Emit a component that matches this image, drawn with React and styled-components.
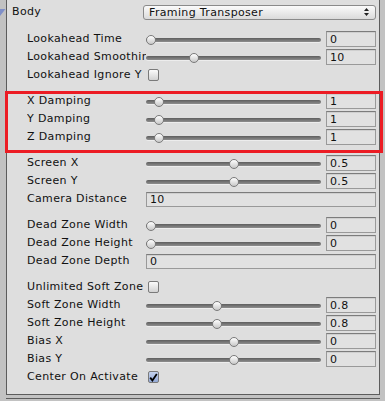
import React from 'react';
import styled, { createGlobalStyle } from 'styled-components';

const GlobalStyle = createGlobalStyle`
  html, body {
    margin: 0;
    padding: 0;
    background: #c2c2c2;
  }
  body {
    font-family: "DejaVu Sans", Verdana, sans-serif;
    font-size: 11px;
    color: #111;
  }
`;

const Page = styled.div`
  position: relative;
  display: flex;
  width: 385px;
  height: 401px;
  overflow: hidden;
  background: #c2c2c2;
`;

const Gutter = styled.div`
  flex: none;
  width: 6px;
  padding-top: 9px;
  svg {
    display: block;
  }
`;

const Column = styled.div`
  flex: none;
  width: 374px;
  display: flex;
  flex-direction: column;
`;

const Panel = styled.div`
  box-sizing: border-box;
  height: 396px;
  border: 1px solid #5c5c5c;
  border-top: none;
  background: #dedede;
  padding: 3px 2px 0 0;
`;

const NextPanel = styled.div`
  margin-top: 3px;
  border-top: 1px solid #5c5c5c;
  height: 2px;
`;

const Group = styled.div`
  margin-top: ${p => p.gap || 8}px;
`;

const Row = styled.div`
  display: flex;
  align-items: center;
  height: 18px;
  padding-left: ${p => (p.header ? 5 : 20)}px;
`;

const Label = styled.div`
  flex: none;
  width: ${p => (p.header ? 131 : 119)}px;
  overflow: hidden;
  white-space: nowrap;
  letter-spacing: 0.35px;
  line-height: 18px;
`;

const Dropdown = styled.div`
  box-sizing: border-box;
  flex: none;
  width: 233px;
  height: 15px;
  display: flex;
  align-items: center;
  justify-content: space-between;
  padding: 0 6px 0 5px;
  border: 1px solid #8a8a8a;
  border-radius: 3px;
  background: linear-gradient(#fbfbfb, #dadada);
  letter-spacing: 0.35px;
`;

const SliderBox = styled.div`
  position: relative;
  flex: none;
  width: 175px;
  height: 18px;
`;

const Track = styled.div`
  position: absolute;
  left: 0;
  right: 0;
  top: 8px;
  height: 4px;
  border-radius: 2px;
  background: linear-gradient(#5e5e5e, #8e8e8e);
  box-shadow: 0 1px 0 #ededed;
`;

const Thumb = styled.div`
  position: absolute;
  top: 5px;
  width: 10px;
  height: 10px;
  box-sizing: border-box;
  border-radius: 50%;
  border: 1px solid #7a7a7a;
  background: linear-gradient(#ffffff, #c8c8c8);
`;

const Field = styled.div`
  box-sizing: border-box;
  flex: none;
  width: ${p => (p.wide ? 230 : 50)}px;
  height: ${p => (p.wide ? 15 : 16)}px;
  margin-left: ${p => (p.wide ? 0 : 5)}px;
  padding-left: 3px;
  display: flex;
  align-items: center;
  border: 1px solid #999;
  border-top-color: #7c7c7c;
  background: #e1e1e1;
  box-shadow: inset 0 1px 0 #cfcfcf;
  color: #111;
  letter-spacing: 0.35px;
`;

const Check = styled.div`
  box-sizing: border-box;
  flex: none;
  width: 11px;
  height: 12px;
  margin-left: 2px;
  border: 1px solid #7a7a7a;
  border-radius: 2px;
  background: ${p =>
    p.checked ? 'linear-gradient(#c4d2ee, #93a9d6)' : 'linear-gradient(#fbfbfb, #d2d2d2)'};
  display: flex;
  align-items: center;
  justify-content: center;
`;

const Highlight = styled.div`
  position: absolute;
  left: 5px;
  top: 91px;
  width: 378px;
  height: 62px;
  box-sizing: border-box;
  border: 3px solid #ec1c24;
  pointer-events: none;
`;

const Slider = ({ frac }) => (
  <SliderBox>
    <Track />
    <Thumb style={{ left: `${Math.round(frac * 165)}px` }} />
  </SliderBox>
);

const SliderRow = ({ label, frac, value }) => (
  <Row>
    <Label>{label}</Label>
    <Slider frac={frac} />
    <Field>{value}</Field>
  </Row>
);

const FieldRow = ({ label, value }) => (
  <Row>
    <Label>{label}</Label>
    <Field wide>{value}</Field>
  </Row>
);

const CheckRow = ({ label, checked }) => (
  <Row>
    <Label>{label}</Label>
    <Check checked={checked}>
      {checked && (
        <svg width="9" height="9" viewBox="0 0 9 9">
          <path d="M1.2 4.6 L3.4 7.4 L7.8 1" fill="none" stroke="#000" strokeWidth="1.8" />
        </svg>
      )}
    </Check>
  </Row>
);

const SortArrows = () => (
  <svg width="5" height="8" viewBox="0 0 5 8">
    <path d="M2.5 0 L5 3 L0 3 Z M0 5 L5 5 L2.5 8 Z" fill="#222" />
  </svg>
);

export default function App() {
  return (
    <Page>
      <GlobalStyle />
      <Gutter>
        <svg width="6" height="8" viewBox="0 0 6 8">
          <polygon points="0,0 5.5,0 0,7" fill="#7f8fc8" />
        </svg>
      </Gutter>
      <Column>
        <Panel>
          <Row header>
            <Label header>Body</Label>
            <Dropdown>
              <span>Framing Transposer</span>
              <SortArrows />
            </Dropdown>
          </Row>
          <Group gap={9}>
            <SliderRow label="Lookahead Time" frac={0} value="0" />
            <SliderRow label="Lookahead Smoothing" frac={0.26} value="10" />
            <CheckRow label="Lookahead Ignore Y" />
          </Group>
          <Group>
            <SliderRow label="X Damping" frac={0.05} value="1" />
            <SliderRow label="Y Damping" frac={0.05} value="1" />
            <SliderRow label="Z Damping" frac={0.05} value="1" />
          </Group>
          <Group>
            <SliderRow label="Screen X" frac={0.5} value="0.5" />
            <SliderRow label="Screen Y" frac={0.5} value="0.5" />
            <FieldRow label="Camera Distance" value="10" />
          </Group>
          <Group>
            <SliderRow label="Dead Zone Width" frac={0} value="0" />
            <SliderRow label="Dead Zone Height" frac={0} value="0" />
            <FieldRow label="Dead Zone Depth" value="0" />
          </Group>
          <Group>
            <CheckRow label="Unlimited Soft Zone" />
            <SliderRow label="Soft Zone Width" frac={0.4} value="0.8" />
            <SliderRow label="Soft Zone Height" frac={0.4} value="0.8" />
            <SliderRow label="Bias X" frac={0.5} value="0" />
            <SliderRow label="Bias Y" frac={0.5} value="0" />
            <CheckRow label="Center On Activate" checked />
          </Group>
        </Panel>
        <NextPanel />
      </Column>
      <Highlight />
    </Page>
  );
}
